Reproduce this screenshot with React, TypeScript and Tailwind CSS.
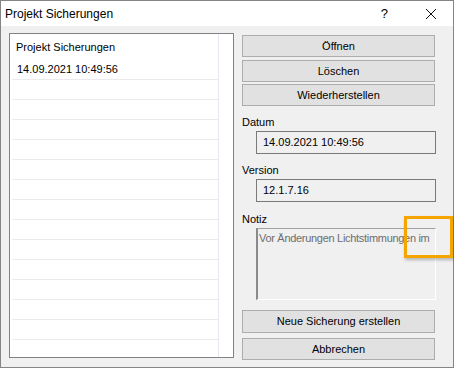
const font = { fontFamily: '"Liberation Sans", Arial, sans-serif' }

function WinButton({ label, className = '' }: { label: string; className?: string }) {
  return (
    <div
      className={`flex h-[22px] w-[193px] items-center justify-center border border-[#adadad] bg-[#e1e1e1] text-[11px] text-black ${className}`}
    >
      {label}
    </div>
  )
}

function Field({ label, value, className = '' }: { label: string; value: string; className?: string }) {
  return (
    <div className={`flex flex-col ${className}`}>
      <div className="h-[16px] text-[11px] leading-[16px] text-black">{label}</div>
      <div className="ml-[14px] mt-[1px] flex h-[23px] w-[180px] items-center border border-[#7a7a7a] bg-[#f0f0f0] pl-[6px] text-[11px] text-black">
        {value}
      </div>
    </div>
  )
}

const emptyRows = Array.from({ length: 13 }, (_, i) => i)

export default function App() {
  return (
    <div
      className="relative flex h-[368px] w-[454px] flex-col border border-[#858585] bg-[#f0f0f0]"
      style={font}
    >
      {/* title bar */}
      <div className="flex h-[25px] shrink-0 items-center bg-white pl-[4px] text-[12px] text-black">
        <span>Projekt Sicherungen</span>
        <span className="ml-auto mr-[37px] text-[13px]">?</span>
        <svg className="mr-[16px]" width="12" height="12" viewBox="0 0 12 12">
          <path d="M1 1 L11 11 M11 1 L1 11" stroke="#111" strokeWidth="1" fill="none" />
        </svg>
      </div>

      <div className="flex flex-1 gap-[8px] pl-[8px] pt-[7px]">
        {/* list */}
        <div className="flex h-[325px] w-[225px] border border-[#828282] bg-white">
          <div className="flex w-[209px] flex-col border-r border-[#e3e8f4] text-[11px] text-black">
            <div className="ml-[2px] mt-[3px] h-[20px] pl-[4px] leading-[20px]">Projekt Sicherungen</div>
            <div className="ml-[2px] h-[23px] border-b border-[#ebebeb] pl-[5px] pt-[2px] leading-[20px]">
              14.09.2021 10:49:56
            </div>
            {emptyRows.map((r) => (
              <div key={r} className="ml-[2px] h-[20px] shrink-0 border-b border-[#ebebeb]" />
            ))}
          </div>
        </div>

        {/* right column */}
        <div className="flex flex-col pt-[2px]">
          <WinButton label="Öffnen" />
          <WinButton label="Löschen" className="mt-[3px]" />
          <WinButton label="Wiederherstellen" className="mt-[2px]" />

          <Field label="Datum" value="14.09.2021 10:49:56" className="mt-[8px]" />
          <Field label="Version" value="12.1.7.16" className="mt-[8px]" />

          <div className="mt-[9px] flex flex-col">
            <div className="h-[16px] text-[11px] leading-[16px] text-black">Notiz</div>
            <div className="ml-[14px] mt-[1px] h-[72px] w-[180px] overflow-hidden whitespace-nowrap border-b border-l-2 border-r border-t border-b-white border-l-[#8a8a8a] border-r-white border-t-[#a0a0a0] bg-[#f0f0f0] pl-[1px] pt-[1px] text-[11px] leading-[16px] tracking-[-0.3px] text-[#6d6d6d]">
              Vor Änderungen Lichtstimmungen im
            </div>
          </div>

          <WinButton label="Neue Sicherung erstellen" className="mt-[10px] h-[23px]" />
          <WinButton label="Abbrechen" className="mt-[5px]" />
        </div>
      </div>

      {/* orange highlight */}
      <div className="pointer-events-none absolute left-[403px] top-[215px] h-[42px] w-[49px] border-[3px] border-[#f6a500] shadow-[1px_2px_3px_rgba(0,0,0,0.25)]" />
    </div>
  )
}
